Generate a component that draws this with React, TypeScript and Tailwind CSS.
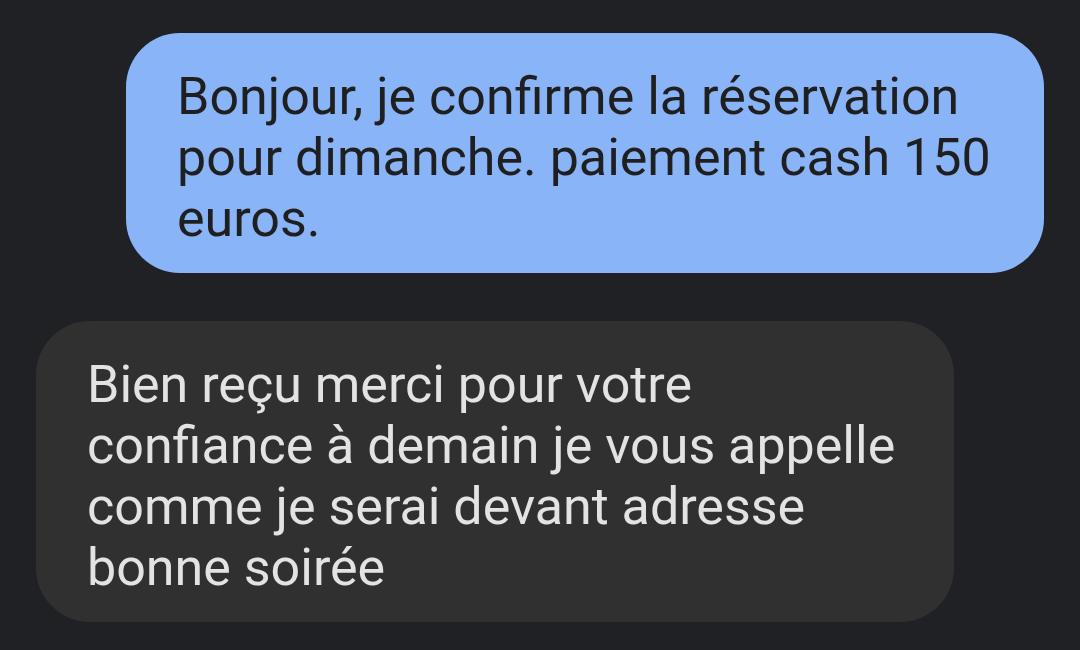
import React from "react";

const font = { fontFamily: "Roboto, 'Noto Sans', sans-serif" };

export default function App() {
  return (
    <div className="w-[1080px] h-[650px] bg-[#202124] overflow-hidden flex flex-col pt-[33px]" style={font}>
      <div className="flex justify-end pr-[36px]">
        <div className="w-[918px] h-[240px] rounded-[54px] bg-[#8ab4f8] text-[#1f1f1f] pl-[51px] pt-[33px] text-[52px] leading-[61px]">
          <div className="whitespace-nowrap">Bonjour, je confirme la réservation</div>
          <div className="whitespace-nowrap">pour dimanche. paiement cash 150</div>
          <div className="whitespace-nowrap">euros.</div>
        </div>
      </div>
      <div className="flex justify-start pl-[36px] mt-[48px]">
        <div className="w-[918px] h-[301px] rounded-[54px] bg-[#303030] text-[#e3e3e3] pl-[51px] pt-[33px] text-[52px] leading-[61px]">
          <div className="whitespace-nowrap">Bien reçu merci pour votre</div>
          <div className="whitespace-nowrap">confiance à demain je vous appelle</div>
          <div className="whitespace-nowrap">comme je serai devant adresse</div>
          <div className="whitespace-nowrap">bonne soirée</div>
        </div>
      </div>
    </div>
  );
}
